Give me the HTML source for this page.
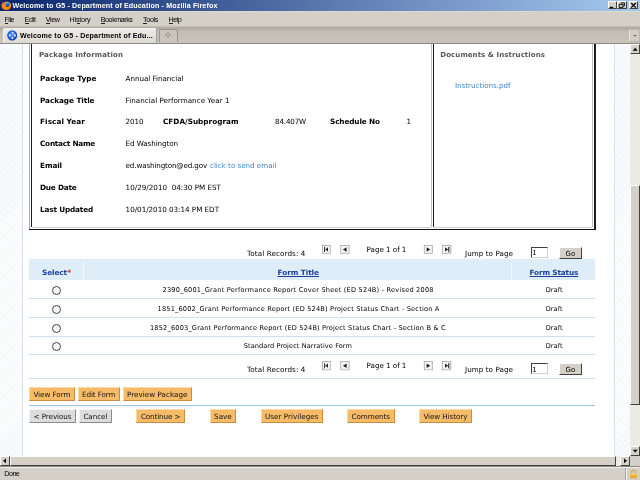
<!DOCTYPE html>
<html><head><meta charset="utf-8"><title>Welcome to G5 - Department of Education</title>
<style>
html,body{margin:0;padding:0;width:640px;height:480px;overflow:hidden;background:#fff}
#w{position:relative;width:640px;height:480px;overflow:hidden;background:#fff;will-change:transform}
#w div,#w span{position:absolute;box-sizing:border-box}
.x{white-space:pre;line-height:0;margin-top:0}
.v{font-family:'DejaVu Sans','Liberation Sans',sans-serif}
.t{font-family:'Liberation Sans','DejaVu Sans',sans-serif}
.hatch{background:repeating-linear-gradient(135deg,#fff 0,#fff .9px,#f3f6f9 .9px,#f3f6f9 1.77px)}
.b{border:1px solid}
.o{background:#f6bb69;border-color:#fbd9a4 #c98d3f #c98d3f #fbd9a4}
.g{background:#dcdcdc;border-color:#f4f4f4 #8c8c8c #8c8c8c #f4f4f4}
.ln{height:1px;background:#cfe0f3;left:28.75px;width:566px}
.pg{width:9px;height:9px;background:#f6f6f6;border:1px solid #a4a4a4;box-shadow:inset -1px -1px 0 #dedede}
.rd{width:9px;height:9px;border-radius:50%;border:1px solid #444;background:#f6f6f6}
.sb{background:#d4d0c8;border:1px solid;border-color:#fff #404040 #404040 #fff}
.ic{position:absolute}
.wb{background:#d4d0c8;border:1px solid;border-color:#fff #404040 #404040 #fff}
</style></head><body><div id="w">

<!-- title bar -->
<div style="left:0;top:0;width:640px;height:11px;background:linear-gradient(90deg,#0a246a 0,#a6caf0 100%)"></div>
<!-- menu bar -->
<div style="left:0;top:11px;width:640px;height:16px;background:#d4d0c8;border-top:1px solid #dcd9d2"></div>
<div style="left:0;top:25.5px;width:640px;height:2px;background:linear-gradient(#c8c4bc,#aaa69e)"></div>
<!-- tab strip -->
<div style="left:0;top:27.5px;width:640px;height:16px;background:linear-gradient(#aeaaa2 0,#c2beb6 25%,#c8c4bc 100%);border-bottom:1px solid #8c8a84"></div>
<div style="left:2.8px;top:27.6px;width:154.7px;height:15.4px;background:linear-gradient(#eeece8,#dcd9d2);border:1px solid #a29e96;border-top-color:#f4f2ee;border-left-color:#f4f2ee;border-bottom:none;border-radius:2px 2px 0 0"></div>
<div style="left:158.75px;top:28.6px;width:19px;height:13.6px;background:#c9c5bd;border:1px solid #97948d;border-bottom:none;border-radius:2px 2px 0 0"></div>
<div style="left:629px;top:28.7px;width:11px;height:13.3px;background:#d2cec6;border:1px solid #bab6ae;border-left-color:#e4e2dc;border-radius:1px"></div>


<!-- firefox icon -->
<svg class="ic" style="left:0.8px;top:0.6px" width="10.6" height="9.6" viewBox="0 0 10.6 9.6"><defs><radialGradient id="fx" cx="40%" cy="55%" r="60%"><stop offset="0" stop-color="#ffb020"/><stop offset=".6" stop-color="#f47a08"/><stop offset="1" stop-color="#d95204"/></radialGradient><linearGradient id="gl" x1="0" y1="0" x2=".3" y2="1"><stop offset="0" stop-color="#9adcff"/><stop offset=".45" stop-color="#2e7be0"/><stop offset="1" stop-color="#0c2e8c"/></linearGradient></defs><path d="M1.3 .4L2.6 1.6Q4.6 .3 6.6 .6Q9.6 1.2 10.2 4.4Q10.4 7.6 7.4 9Q4.4 9.8 2 8Q0 6 .5 3.4Q.8 2.4 1.6 2Z" fill="url(#fx)"/><circle cx="6.3" cy="3.6" r="2.5" fill="url(#gl)"/><path d="M3.2 3.4Q4.6 3.2 5.2 4.2Q4.4 4.6 4.2 5.6Q5.4 6.6 7.2 6Q8.6 5.2 8.6 3.2Q9.8 5.6 8.2 7.4Q6 9 3.8 7.6Q2.4 6.2 3.2 3.4Z" fill="#f58a10"/><path d="M8.7 2.2Q9.9 4 9.3 6" stroke="#ffc61a" stroke-width=".7" fill="none"/></svg>
<!-- tab favicon -->
<svg class="ic" style="left:7px;top:30.1px" width="10.4" height="10.7" viewBox="0 0 10.4 10.7"><defs><radialGradient id="fv" cx="45%" cy="40%" r="60%"><stop offset="0" stop-color="#3f86ff"/><stop offset=".7" stop-color="#1a55d8"/><stop offset="1" stop-color="#0f379f"/></radialGradient></defs><ellipse cx="5.2" cy="5.35" rx="5" ry="5.15" fill="url(#fv)"/><path d="M3.4 3.2L7.4 7.4M7.6 3.2L3.2 7.6" stroke="#69a4ff" stroke-width=".8"/><circle cx="5.6" cy="2.8" r="1.05" fill="#f3ebe0"/><circle cx="2.8" cy="5.4" r="1.05" fill="#f3ebe0"/><circle cx="7.9" cy="5.4" r="1.05" fill="#f3ebe0"/><circle cx="5.4" cy="8.1" r="1.05" fill="#f3ebe0"/></svg>
<!-- window buttons -->
<div class="wb" style="left:607.75px;top:1.25px;width:8.75px;height:8.1px"></div>
<div class="wb" style="left:617.25px;top:1.25px;width:9.25px;height:8.1px"></div>
<div class="wb" style="left:629px;top:1.25px;width:9px;height:8.1px"></div>
<svg class="ic" style="left:607px;top:1px" width="33" height="9" viewBox="0 0 33 9"><rect x="2.6" y="5.8" width="3.6" height="1.2" fill="#000"/><path d="M13.6 1.9h3.8v3h-1.2M12.2 3.4h3.8v3h-3.8z" stroke="#000" stroke-width=".9" fill="none"/><path d="M24.2 2l4.6 4.6M28.8 2l-4.6 4.6" stroke="#000" stroke-width="1.2"/></svg>
<!-- new tab plus, tab list arrow -->
<svg class="ic" style="left:164px;top:31px" width="8" height="8" viewBox="0 0 8 8"><path d="M4 1.2V6.8M1.2 4H6.8" stroke="#77746c" stroke-width=".9" stroke-dasharray="1.9 1.8"/></svg>
<svg class="ic" style="left:632px;top:33px" width="6" height="5" viewBox="0 0 6 5"><path d="M1.3 2h3.4l-1.7 1.4z" fill="#55524c"/></svg>
<!-- menu underlines -->
<div style="left:4.5px;top:22.6px;width:3.5px;height:.7px;background:#222"></div>
<div style="left:24.5px;top:22.6px;width:4px;height:.7px;background:#222"></div>
<div style="left:45.8px;top:22.6px;width:4.4px;height:.7px;background:#222"></div>
<div style="left:77.3px;top:22.6px;width:3.2px;height:.7px;background:#222"></div>
<div style="left:100.8px;top:22.6px;width:4.2px;height:.7px;background:#222"></div>
<div style="left:143px;top:22.6px;width:3.8px;height:.7px;background:#222"></div>
<div style="left:168.5px;top:22.6px;width:4.4px;height:.7px;background:#222"></div>

<!-- page left/right hatch -->
<div class="hatch" style="left:0;top:43.5px;width:22px;height:412.5px"></div>
<div style="left:22px;top:43.5px;width:1px;height:412.5px;background:#cfe0f5"></div>
<div class="hatch" style="left:615px;top:43.5px;width:15px;height:412.5px"></div>
<div style="left:614px;top:43.5px;width:1px;height:412.5px;background:#cfe0f5"></div>

<!-- package box borders -->
<div style="left:29.25px;top:43.5px;width:1px;height:185.5px;background:#b0b0b0"></div>
<div style="left:30.75px;top:43.5px;width:1.25px;height:183.5px;background:#1c1c1c"></div>
<div style="left:431.2px;top:43.5px;width:.9px;height:183.5px;background:#bcbcbc"></div>
<div style="left:432.75px;top:43.5px;width:1.25px;height:183.5px;background:#1c1c1c"></div>
<div style="left:592.4px;top:43.5px;width:.9px;height:183.5px;background:#bcbcbc"></div>
<div style="left:593.9px;top:43.5px;width:1.8px;height:186.5px;background:#1c1c1c"></div>
<div style="left:32px;top:226.9px;width:399.2px;height:1.6px;background:#cdcdcd"></div>
<div style="left:434px;top:226.9px;width:158.4px;height:1.6px;background:#cdcdcd"></div>
<div style="left:29.25px;top:228.6px;width:566.45px;height:1.4px;background:#111"></div>

<!-- table header -->
<div style="left:28.75px;top:258.75px;width:565.75px;height:21.25px;background:#deedf8"></div>
<div style="left:83px;top:262px;width:1px;height:18px;background:#f4f9fd"></div>
<div style="left:511px;top:262px;width:1px;height:18px;background:#f4f9fd"></div>
<div class="ln" style="top:298px"></div>
<div class="ln" style="top:316.8px"></div>
<div class="ln" style="top:335.5px"></div>
<div class="ln" style="top:354.3px"></div>
<div class="ln" style="top:378px"></div>
<div class="ln" style="top:405px;background:#9fc3e6"></div>

<div class="rd" style="left:52.2px;top:286px"></div>
<div class="rd" style="left:52.2px;top:304.75px"></div>
<div class="rd" style="left:52.2px;top:323.5px"></div>
<div class="rd" style="left:52.2px;top:342.2px"></div>

<div style="left:530.8px;top:247px;width:16.8px;height:10.8px;background:#fff;border:1px solid;border-color:#404040 #d4d0c8 #d4d0c8 #404040"></div>
<div style="left:558.5px;top:247.2px;width:23.4px;height:11.4px;background:#d4d0c8;border:1px solid;border-color:#fff #404040 #404040 #fff"></div>
<div style="left:530.8px;top:363.25px;width:16.8px;height:10.8px;background:#fff;border:1px solid;border-color:#404040 #d4d0c8 #d4d0c8 #404040"></div>
<div style="left:558.5px;top:363.45px;width:23.4px;height:11.4px;background:#d4d0c8;border:1px solid;border-color:#fff #404040 #404040 #fff"></div>
<svg class="ic" style="left:0;top:0" width="640" height="480" viewBox="0 0 640 480">
<rect x="322.40000000000003" y="245.3" width="8.3" height="8.3" fill="#f7f7f7" stroke="#8c8c8c" stroke-width=".6"/><path d="M323.1 253H330.1V246" stroke="#dadada" stroke-width=".7" fill="none"/><rect x="324.1" y="246.9" width="1" height="5.1" fill="#222"/><path d="M325.3 249.45L328.0 247.3V251.6Z" fill="#222"/>
<rect x="340.8" y="245.3" width="8.3" height="8.3" fill="#f7f7f7" stroke="#8c8c8c" stroke-width=".6"/><path d="M341.5 253H348.5V246" stroke="#dadada" stroke-width=".7" fill="none"/><path d="M342.9 249.45L346.6 247.2V251.7Z" fill="#222"/>
<rect x="424.2" y="245.3" width="8.3" height="8.3" fill="#f7f7f7" stroke="#8c8c8c" stroke-width=".6"/><path d="M424.9 253H431.9V246" stroke="#dadada" stroke-width=".7" fill="none"/><path d="M430.29999999999995 249.45L426.59999999999997 247.2V251.7Z" fill="#222"/>
<rect x="442.6" y="245.3" width="8.3" height="8.3" fill="#f7f7f7" stroke="#8c8c8c" stroke-width=".6"/><path d="M443.3 253H450.3V246" stroke="#dadada" stroke-width=".7" fill="none"/><rect x="448.2" y="246.9" width="1" height="5.1" fill="#222"/><rect x="449.2" y="246.4" width="1.3" height="6.2" fill="#b4b4b4"/><path d="M448.2 249.45L445.0 247.3V251.6Z" fill="#222"/>
<rect x="322.40000000000003" y="361.55" width="8.3" height="8.3" fill="#f7f7f7" stroke="#8c8c8c" stroke-width=".6"/><path d="M323.1 369.25H330.1V362.25" stroke="#dadada" stroke-width=".7" fill="none"/><rect x="324.1" y="363.15" width="1" height="5.1" fill="#222"/><path d="M325.3 365.7L328.0 363.55V367.85Z" fill="#222"/>
<rect x="340.8" y="361.55" width="8.3" height="8.3" fill="#f7f7f7" stroke="#8c8c8c" stroke-width=".6"/><path d="M341.5 369.25H348.5V362.25" stroke="#dadada" stroke-width=".7" fill="none"/><path d="M342.9 365.7L346.6 363.45V367.95Z" fill="#222"/>
<rect x="424.2" y="361.55" width="8.3" height="8.3" fill="#f7f7f7" stroke="#8c8c8c" stroke-width=".6"/><path d="M424.9 369.25H431.9V362.25" stroke="#dadada" stroke-width=".7" fill="none"/><path d="M430.29999999999995 365.7L426.59999999999997 363.45V367.95Z" fill="#222"/>
<rect x="442.6" y="361.55" width="8.3" height="8.3" fill="#f7f7f7" stroke="#8c8c8c" stroke-width=".6"/><path d="M443.3 369.25H450.3V362.25" stroke="#dadada" stroke-width=".7" fill="none"/><rect x="448.2" y="363.15" width="1" height="5.1" fill="#222"/><rect x="449.2" y="362.65" width="1.3" height="6.2" fill="#b4b4b4"/><path d="M448.2 365.7L445.0 363.55V367.85Z" fill="#222"/>
</svg>
<div class="b o" style="left:28.75px;top:387px;width:46.25px;height:13.75px"></div>
<div class="b o" style="left:77.5px;top:387px;width:42.5px;height:13.75px"></div>
<div class="b o" style="left:122.5px;top:387px;width:69.5px;height:13.75px"></div>
<div class="b g" style="left:28.75px;top:408.75px;width:47.5px;height:13.75px"></div>
<div class="b g" style="left:78.75px;top:408.75px;width:33.25px;height:13.75px"></div>
<div class="b o" style="left:136.25px;top:408.75px;width:48.75px;height:13.75px"></div>
<div class="b o" style="left:209.5px;top:408.75px;width:26.75px;height:13.75px"></div>
<div class="b o" style="left:260.5px;top:408.75px;width:62.5px;height:13.75px"></div>
<div class="b o" style="left:347px;top:408.75px;width:47.5px;height:13.75px"></div>
<div class="b o" style="left:418.75px;top:408.75px;width:53.25px;height:13.75px"></div>

<!-- vertical scrollbar -->
<div style="left:630px;top:43.5px;width:10px;height:412.5px;background:#eceae4"></div>
<div class="sb" style="left:630px;top:43.5px;width:10px;height:10.5px"></div>
<div class="sb" style="left:630px;top:184.5px;width:10px;height:220.3px"></div>
<div class="sb" style="left:630px;top:446px;width:10px;height:10px"></div>
<!-- horizontal scrollbar -->
<div style="left:0;top:456px;width:630px;height:10px;background:#eceae4"></div>
<div class="sb" style="left:0;top:456px;width:10px;height:10px"></div>
<div class="sb" style="left:10.4px;top:456px;width:605.6px;height:10px"></div>
<div class="sb" style="left:620px;top:456px;width:10px;height:10px"></div>
<div style="left:630px;top:456px;width:10px;height:10px;background:#d4d0c8"></div>

<svg class="ic" style="left:630px;top:43.5px" width="10" height="10.5" viewBox="0 0 10 10.5"><path d="M2.8 6.8L5.2 3.8L7.6 6.8Z" fill="#000"/></svg>
<svg class="ic" style="left:630px;top:446px" width="10" height="10" viewBox="0 0 10 10"><path d="M2.8 3.8L5.2 6.6L7.6 3.8Z" fill="#000"/></svg>
<svg class="ic" style="left:0px;top:456px" width="10" height="10" viewBox="0 0 10 10"><path d="M6 2.4L3.1 4.8L6 7.2Z" fill="#000"/></svg>
<svg class="ic" style="left:620px;top:456px" width="10" height="10" viewBox="0 0 10 10"><path d="M4 2.4L6.9 4.8L4 7.2Z" fill="#000"/></svg>
<!-- status bar -->
<div style="left:0;top:466px;width:640px;height:14px;background:#d4d0c8;border-top:1px solid #8a8880"></div>


<div style="left:0;top:467px;width:640px;height:1px;background:#f0eee8"></div>
<div style="left:625.5px;top:468px;width:1px;height:12px;background:#f4f2ee"></div>
<div style="left:624.5px;top:468px;width:1px;height:12px;background:#a8a49c"></div>
<svg class="ic" style="left:628.5px;top:468.6px" width="9" height="10" viewBox="0 0 9 10"><path d="M2.6 4.6V3.2a1.9 1.9 0 0 1 3.8 0V4.6" stroke="#c9a24a" stroke-width="1.1" fill="none"/><rect x="1" y="4.3" width="7" height="5.2" rx=".8" fill="#e9ad3c"/><rect x="1" y="4.3" width="7" height="1.6" rx=".8" fill="#f4cf7a"/></svg>
<span class="x t" style="left:12.50px;top:6px;font-size:7.1px;letter-spacing:0.134px;font-weight:bold;color:#fff;">Welcome to G5 - Department of Education - Mozilla Firefox</span>
<span class="x t" style="left:4.50px;top:20px;font-size:7.2px;letter-spacing:-0.523px;">File</span>
<span class="x t" style="left:24.50px;top:20px;font-size:7.2px;letter-spacing:-0.285px;">Edit</span>
<span class="x t" style="left:45.75px;top:20px;font-size:7.2px;letter-spacing:-0.426px;">View</span>
<span class="x t" style="left:69.50px;top:20px;font-size:7.2px;letter-spacing:-0.196px;">History</span>
<span class="x t" style="left:100.75px;top:20px;font-size:7.2px;letter-spacing:-0.467px;">Bookmarks</span>
<span class="x t" style="left:143.00px;top:20px;font-size:7.2px;letter-spacing:-0.356px;">Tools</span>
<span class="x t" style="left:168.50px;top:20px;font-size:7.2px;letter-spacing:-0.512px;">Help</span>
<span class="x t" style="left:20.00px;top:36px;font-size:7.1px;letter-spacing:0.172px;font-weight:bold;">Welcome to G5 - Department of Edu...</span>
<span class="x t" style="left:4.30px;top:474px;font-size:7.2px;letter-spacing:-0.547px;">Done</span>
<span class="x v" style="left:39.00px;top:55px;font-size:7.0px;letter-spacing:0.113px;font-weight:bold;color:#555;">Package Information</span>
<span class="x v" style="left:440.30px;top:55px;font-size:7.0px;letter-spacing:0.085px;font-weight:bold;color:#555;">Documents &amp; Instructions</span>
<span class="x v" style="left:40.00px;top:79px;font-size:7.3px;letter-spacing:0.047px;font-weight:bold;">Package Type</span>
<span class="x v" style="left:40.00px;top:101px;font-size:7.3px;letter-spacing:-0.062px;font-weight:bold;">Package Title</span>
<span class="x v" style="left:40.00px;top:122px;font-size:7.3px;letter-spacing:0.071px;font-weight:bold;">Fiscal Year</span>
<span class="x v" style="left:40.00px;top:144px;font-size:7.3px;letter-spacing:-0.243px;font-weight:bold;">Contact Name</span>
<span class="x v" style="left:40.00px;top:166px;font-size:7.3px;letter-spacing:-0.103px;font-weight:bold;">Email</span>
<span class="x v" style="left:40.00px;top:188px;font-size:7.3px;letter-spacing:-0.209px;font-weight:bold;">Due Date</span>
<span class="x v" style="left:40.00px;top:210px;font-size:7.3px;letter-spacing:-0.159px;font-weight:bold;">Last Updated</span>
<span class="x v" style="left:125.60px;top:79px;font-size:7.2px;letter-spacing:-0.053px;">Annual Financial</span>
<span class="x v" style="left:125.60px;top:101px;font-size:7.2px;letter-spacing:0.008px;">Financial Performance Year 1</span>
<span class="x v" style="left:125.60px;top:122px;font-size:7.2px;letter-spacing:-0.099px;">2010</span>
<span class="x v" style="left:163.00px;top:122px;font-size:7.3px;letter-spacing:-0.005px;font-weight:bold;">CFDA/Subprogram</span>
<span class="x v" style="left:275.00px;top:122px;font-size:7.2px;letter-spacing:-0.181px;">84.407W</span>
<span class="x v" style="left:330.00px;top:122px;font-size:7.3px;letter-spacing:-0.115px;font-weight:bold;">Schedule No</span>
<span class="x v" style="left:406.50px;top:122px;font-size:7.2px;letter-spacing:-0.078px;">1</span>
<span class="x v" style="left:125.60px;top:144px;font-size:7.2px;letter-spacing:-0.094px;">Ed Washington</span>
<span class="x v" style="left:125.60px;top:166px;font-size:7.2px;letter-spacing:-0.151px;">ed.washington@ed.gov</span>
<span class="x v" style="left:210.00px;top:166px;font-size:7.2px;letter-spacing:-0.039px;color:#4387cf;">click to send email</span>
<span class="x v" style="left:125.60px;top:188px;font-size:7.2px;letter-spacing:0.004px;">10/29/2010  04:30 PM EST</span>
<span class="x v" style="left:125.60px;top:210px;font-size:7.2px;letter-spacing:-0.026px;">10/01/2010 03:14 PM EDT</span>
<span class="x v" style="left:455.00px;top:86px;font-size:7.2px;letter-spacing:-0.041px;color:#4387cf;">Instructions.pdf</span>
<span class="x v" style="left:247.00px;top:254px;font-size:7.2px;letter-spacing:0.098px;">Total Records: 4</span>
<span class="x v" style="left:366.60px;top:250px;font-size:7.2px;letter-spacing:-0.048px;">Page 1 of 1</span>
<span class="x v" style="left:465.00px;top:254px;font-size:7.2px;letter-spacing:0.047px;">Jump to Page</span>
<span class="x v" style="left:532.20px;top:253px;font-size:7.0px;letter-spacing:-0.669px;">1</span>
<span class="x v" style="left:565.50px;top:254px;font-size:7.0px;letter-spacing:0.141px;">Go</span>
<span class="x v" style="left:247.00px;top:370px;font-size:7.2px;letter-spacing:0.098px;">Total Records: 4</span>
<span class="x v" style="left:366.60px;top:366px;font-size:7.2px;letter-spacing:-0.048px;">Page 1 of 1</span>
<span class="x v" style="left:465.00px;top:370px;font-size:7.2px;letter-spacing:0.047px;">Jump to Page</span>
<span class="x v" style="left:532.20px;top:370px;font-size:7.0px;letter-spacing:-0.669px;">1</span>
<span class="x v" style="left:565.50px;top:370px;font-size:7.0px;letter-spacing:0.141px;">Go</span>
<span class="x v" style="left:42.00px;top:273px;font-size:7.3px;letter-spacing:-0.078px;font-weight:bold;color:#1c3f94;">Select</span>
<span class="x v" style="left:67.20px;top:273px;font-size:7.3px;letter-spacing:-0.278px;font-weight:bold;color:#e02020;">*</span>
<span class="x v" style="left:277.50px;top:273px;font-size:7.3px;letter-spacing:-0.037px;font-weight:bold;color:#1c3f94;text-decoration:underline;text-decoration-thickness:.8px">Form Title</span>
<span class="x v" style="left:529.50px;top:273px;font-size:7.3px;letter-spacing:-0.126px;font-weight:bold;color:#1c3f94;text-decoration:underline;text-decoration-thickness:.8px">Form Status</span>
<span class="x v" style="left:162.50px;top:290px;font-size:6.6px;letter-spacing:0.214px;">2390_6001_Grant Performance Report Cover Sheet (ED 524B) - Revised 2008</span>
<span class="x v" style="left:157.50px;top:309px;font-size:6.6px;letter-spacing:0.182px;">1851_6002_Grant Performance Report (ED 524B) Project Status Chart - Section A</span>
<span class="x v" style="left:150.00px;top:328px;font-size:6.6px;letter-spacing:0.171px;">1852_6003_Grant Performance Report (ED 524B) Project Status Chart - Section B &amp; C</span>
<span class="x v" style="left:243.75px;top:346px;font-size:6.6px;letter-spacing:0.068px;">Standard Project Narrative Form</span>
<span class="x v" style="left:545.75px;top:290px;font-size:6.6px;letter-spacing:0.025px;">Draft</span>
<span class="x v" style="left:545.75px;top:309px;font-size:6.6px;letter-spacing:0.025px;">Draft</span>
<span class="x v" style="left:545.75px;top:328px;font-size:6.6px;letter-spacing:0.025px;">Draft</span>
<span class="x v" style="left:545.75px;top:346px;font-size:6.6px;letter-spacing:0.025px;">Draft</span>
<span class="x v" style="left:33.38px;top:395px;font-size:7.2px;letter-spacing:-0.050px;color:#111;">View Form</span>
<span class="x v" style="left:82.00px;top:395px;font-size:7.2px;letter-spacing:-0.090px;color:#111;">Edit Form</span>
<span class="x v" style="left:127.00px;top:395px;font-size:7.2px;letter-spacing:0.029px;color:#111;">Preview Package</span>
<span class="x v" style="left:33.50px;top:417px;font-size:7.2px;letter-spacing:-0.069px;color:#111;">&lt; Previous</span>
<span class="x v" style="left:83.38px;top:417px;font-size:7.2px;letter-spacing:-0.060px;color:#111;">Cancel</span>
<span class="x v" style="left:140.88px;top:417px;font-size:7.2px;letter-spacing:-0.114px;color:#111;">Continue &gt;</span>
<span class="x v" style="left:214.12px;top:417px;font-size:7.2px;letter-spacing:-0.039px;color:#111;">Save</span>
<span class="x v" style="left:265.00px;top:417px;font-size:7.2px;letter-spacing:0.018px;color:#111;">User Privileges</span>
<span class="x v" style="left:351.50px;top:417px;font-size:7.2px;letter-spacing:-0.059px;color:#111;">Comments</span>
<span class="x v" style="left:423.38px;top:417px;font-size:7.2px;letter-spacing:-0.077px;color:#111;">View History</span>
</div></body></html>
